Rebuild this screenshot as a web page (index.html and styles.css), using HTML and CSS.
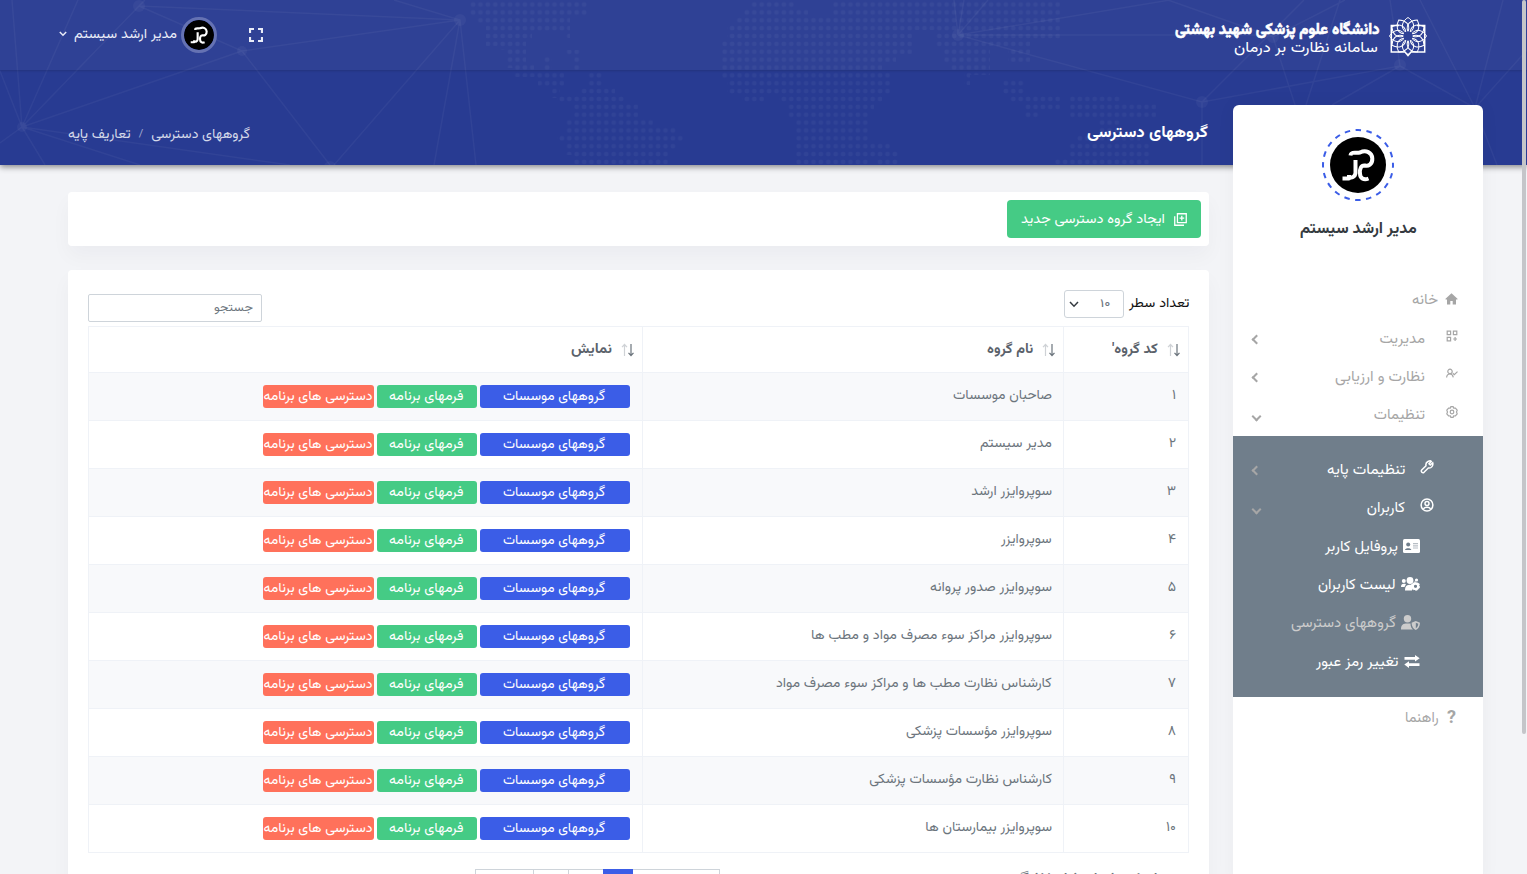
FILE: index.html
```html
<!DOCTYPE html>
<html lang="fa" dir="rtl">
<head>
<meta charset="utf-8">
<title>گروههای دسترسی</title>
<link rel="stylesheet" href="styles.css">
</head>
<body>
<div class="page">
<header class="hero">
  <svg class="art" width="1527" height="165" viewBox="0 0 1527 165">
    <defs><pattern id="dots" x="499" y="0.6" width="7.4" height="7.87" patternUnits="userSpaceOnUse"><circle cx="3.7" cy="3.9" r="2.3" fill="#fff" fill-opacity=".04"/></pattern></defs>
    <g fill="url(#dots)">
      <path d="M469 0H588V16H570V38H565V32H532V40H526V64H534V72H544V56H552V72H564V86H560V98H552V86H538V77H513V68H506V50H499V46H486V24H477V16H469Z"/>
      <path d="M566 50H580V70H602V87H587V70H573V56H566ZM580 87H615V95H624V103H638V118H653V126H676V133H683V142H676V150H668V165H573V155H565V142H557V134H565V118H573V102H557V94H580Z"/>
      <path d="M750 0H796V9H808V16H833V0H1060V40H1030V62H1008V46H990V75H970V85H964V70H950V64H944V48H936V30H912V40H912V54H896V62H882V70H890V94H882V102H874V110H868V165H795V118H787V102H779V94H764V102H742V94H727V80H720V40H727V24H735V16H743V8H750Z"/>
      <path d="M868 142H890V150H898V165H876V158H868ZM1002 78H1025V94H1060V110H1040V118H1025V102H1010V94H1002ZM1070 94H1120V102H1156V118H1120V134H1140V142H1150V165H1054V157H1068V142H1076V134H1098V118H1070Z"/>
    </g>
    <g class="net">
      <path d="M139 6L145 0M139 6L22 127L12 0M139 6L242 51L460 20ZM22 127L78 0M22 127L0 71M22 127L242 51L330 165M22 127L0 143M22 127L45 165M22 127L140 165M22 127L290 165M394 0L460 20L434 165M460 20L476 165M460 20L334 165M958 35L1170 0M958 35L954 0M958 35L964 0M958 35L988 0M958 35H1273M958 35L1202 102L1400 66L1390 0M1202 102V165M1202 102L1304 0M1168 0L1273 37L1345 0M1273 37L1296 108M1400 66L1332 105M1400 66L1475 108L1527 50M1475 108L1420 0M1475 108L1503 0M1340 0L1306 105M1475 108L1497 165"/>
      <g class="knots"><circle cx="139" cy="6" r="6"/><circle cx="22" cy="127" r="5"/><circle cx="242" cy="51" r="5"/><circle cx="460" cy="20" r="6"/><circle cx="958" cy="35" r="6"/><circle cx="1202" cy="102" r="6"/><circle cx="1273" cy="37" r="6"/><circle cx="1400" cy="65" r="6"/><circle cx="330" cy="167" r="6"/></g>
    </g>
  </svg>
  <div class="topbar">
    <div class="brand">
      <svg width="38" height="42" viewBox="0 0 38 42" fill="none" stroke="#fff">
        <path d="M10 9.600H2.300V36H16L19 39.500L22 36H35.700V9.600H28" stroke-width="1.500"/>
        <g id="rose" stroke-width="1"></g>
      </svg>
      <div class="brand-text"><b data-w="205">دانشگاه علوم پزشکی شهید بهشتی</b><span data-w="144">سامانه نظارت بر درمان</span></div>
    </div>
    <div class="tools">
      <svg class="full" width="14" height="14" viewBox="0 0 14 14" fill="none" stroke="#e9ecf8" stroke-width="2.200"><path d="M1 5V1H5M9 1H13V5M13 9V13H9M5 13H1V9"/></svg>
      <svg class="mini" viewBox="0 0 56 56"><use href="#mono"/></svg>
      <span class="user" data-w="103">مدیر ارشد سیستم</span>
      <svg class="caret" width="8" height="6" viewBox="0 0 8 6" fill="none" stroke="#e9ecf8" stroke-width="1.500"><path d="M.8 1L4 4.200L7.200 1"/></svg>
    </div>
  </div>
  <div class="titlebar">
    <h1 data-w="121">گروههای دسترسی</h1>
    <nav class="crumbs"><span data-w="99">گروههای دسترسی</span><i>/</i><span data-w="63">تعاریف پایه</span></nav>
  </div>
</header>

<div class="body">
  <aside class="side">
    <svg class="avatar" width="74" height="74" viewBox="0 0 74 74">
      <circle cx="37" cy="37" r="35" fill="none" stroke="#3b5de7" stroke-width="2" stroke-dasharray="5.500 5.495" stroke-dashoffset="2.700"/>
      <svg x="9" y="9" width="56" height="56" viewBox="0 0 56 56"><g id="mono"><circle cx="28" cy="28" r="28"/><path fill="none" stroke="#fff" stroke-width="4" stroke-linejoin="round" d="M20.500 18.500C21 14 25 16.500 30 15.500C36 12.500 42 15.500 42.300 21.500C42.600 27.500 38 29.500 35 28.500C31 28 29.500 32 30 36.500C30 41 33.500 43.500 38.500 41.500M25.500 23V36C25 40 21.500 41.500 19 39.500M19 38V41.500H12.500"/></g></svg>
    </svg>
    <div class="name" data-w="117">مدیر ارشد سیستم</div>
    <ul class="menu">
      <li class="flat"><svg width="13" height="12" viewBox="0 0 12 12" fill="#a6a6a6"><path d="M6 .3L12 5.800V6.500H10.500V11.500H7.200V8H4.800V11.500H1.500V6.500H0V5.800Z"/></svg><span data-w="26">خانه</span></li>
      <li><svg width="12" height="12" viewBox="0 0 12 12" class="ln"><path d="M1.200 1.200H4.600V4.600H1.200ZM7.400 1.200H10.800V4.600H7.400ZM1.200 7.400H4.600V10.800H1.200ZM7.200 9H11M9.100 7.100V11"/></svg><span data-w="46">مدیریت</span><i class="go"></i></li>
      <li><svg width="12" height="12" viewBox="0 0 12 12" class="ln"><circle cx="4" cy="3.400" r="2.200"/><path d="M.6 9.500C.8 6.700 2 6 4 6S6.800 6.900 7.300 9.300M6.800 5.300L8.300 6.600L11.500 3.600"/></svg><span data-w="90">نظارت و ارزیابی</span><i class="go"></i></li>
      <li><svg width="12" height="12" viewBox="0 0 12 12" class="ln"><path d="M4.900.7H7.100L7.700 2.100L9.400 2L11.200 4.200L10.500 6L11.200 7.800L9.400 10L7.700 9.900L7.100 11.300H4.900L4.300 9.900L2.600 10L.8 7.800L1.500 6L.8 4.200L2.600 2L4.300 2.100Z"/><circle cx="6" cy="6" r="1.800"/></svg><span data-w="51">تنظیمات</span><i class="dn"></i></li>
    </ul>
    <ul class="menu sub">
      <li class="l2"><svg width="14" height="14" viewBox="0 0 14 14" class="ln"><path d="M8 1.500C10 .5 11 1 11.300 1.400L9 3.700L10.300 5L12.700 2.800C13.500 5.500 11.500 8.500 8.300 8L4 12.300C2.500 13.500.5 11.500 1.700 10L6 5.700C5.600 4 6.500 2.300 8 1.500Z"/></svg><span data-w="78">تنظیمات پایه</span><i class="go"></i></li>
      <li class="l2"><svg width="14" height="14" viewBox="0 0 14 14" class="ln"><circle cx="7" cy="7" r="5.900"/><circle cx="7" cy="5.600" r="2"/><path d="M3.700 11C4 8.500 10 8.500 10.300 11"/></svg><span data-w="38">کاربران</span><i class="dn"></i></li>
      <li class="l3"><svg width="17" height="14" viewBox="0 0 17 14"><rect width="17" height="14" rx="1.500" fill="#fff"/><g fill="#6f7e8c"><circle cx="5.200" cy="5.500" r="2"/><path d="M2 11C2 8.600 8.300 8.600 8.300 11Z"/><path opacity=".5" d="M10 4H15V5.200H10ZM10 6.200H15V7.400H10ZM10 8.400H15V9.400H10Z"/></g></svg><span data-w="73">پروفایل کاربر</span></li>
      <li class="l3"><svg width="19" height="14" viewBox="0 0 19 14" fill="#fff"><circle cx="9" cy="3.500" r="3.400"/><circle cx="2.800" cy="4" r="2"/><circle cx="15.500" cy="3" r="1.600"/><path d="M0 10C0 6.500 2 6.500 5 7L3.500 10ZM4 13.500C4 8 7 7.500 11 7.800V13.500Z"/><circle cx="14.500" cy="9.200" r="2.700" fill="none" stroke="#fff" stroke-width="2.400"/><circle cx="14.500" cy="9.200" r="4.200" fill="none" stroke="#fff" stroke-dasharray="2.200 2.200"/><circle cx="14.500" cy="9.200" r="1.200" fill="#707e8b"/></svg><span data-w="78">لیست کاربران</span></li>
      <li class="l3 on"><svg width="19" height="15" viewBox="0 0 19 15" fill="#ccc"><circle cx="6.500" cy="3.800" r="3.700"/><path d="M0 14.500C0 9.500 2 8.500 6.500 8.500H9.500C9.500 11.500 10.500 13.500 12 14.500ZM14.800 6L19 7.700C19 11.500 17 14 14.800 15C12.500 14 10.600 11.500 10.600 7.700Z"/><path d="M14.800 7.700L17.300 8.700C17.200 11 16.200 12.500 14.800 13.300Z" fill="#6f7e8c"/></svg><span data-w="105">گروههای دسترسی</span></li>
      <li class="l3"><svg width="16" height="13" viewBox="0 0 16 13" fill="#fff"><path d="M.5 2H11V0L15.700 3.300L11 6.500V4.700H.5ZM15.500 8.200H5V6.300L.3 9.600L5 12.900V11H15.500Z"/></svg><span data-w="83">تغییر رمز عبور</span></li>
    </ul>
    <ul class="menu last"><li class="flat"><b class="q">?</b><span data-w="34">راهنما</span></li></ul>
  </aside>

  <main>
    <section class="card actions"><button class="add"><svg width="15" height="15" viewBox="0 0 14 14" fill="none" stroke="#fff" stroke-width="1.400"><path d="M3.700.8H13.200V10.300H3.700ZM8.400 3V8M6 5.500H11M.8 3.500V13.200H10.800"/></svg><span data-w="144">ایجاد گروه دسترسی جدید</span></button></section>
    <section class="card list">
      <div class="filters">
        <label><span data-w="60">تعداد سطر</span><span class="select"><span data-w="11">۱۰</span><svg width="10" height="7" viewBox="0 0 10 7" fill="none" stroke="#343a40" stroke-width="1.500"><path d="M1 1L5 5.200L9 1"/></svg></span></label>
        <div class="search"><span data-w="39">جستجو</span></div>
      </div>
      <table>
        <colgroup><col class="c1"><col class="c2"><col class="c3"></colgroup>
        <thead><tr><th><div><i class="sort"></i><span data-w="46">کد گروه'</span></div></th><th><div><i class="sort"></i><span data-w="46">نام گروه</span></div></th><th><div><i class="sort"></i><span data-w="41">نمایش</span></div></th></tr></thead>
        <tbody id="rows"></tbody>
      </table>
      <div class="foot"><span class="info" data-w="182">نمایش ۱ تا ۱۰ از ۱۲ گروه</span>
        <div class="pager"><span class="p1"></span><span class="p2"></span><span class="p3"></span><span class="p4"></span><span class="p5"></span></div></div>
    </section>
  </main>
</div>
<div class="scroll"></div>
</div>
<script src="script.js"></script>
</body>
</html>
```
FILE: styles.css
```css
*{box-sizing:border-box}
html,body{margin:0;height:874px;overflow:hidden}
body{background:#f3f4f7;font-family:"Vazirmatn","Noto Sans Arabic","DejaVu Sans",sans-serif;font-size:14px;line-height:20px;color:#6c757d}
ul{list-style:none;margin:0;padding:0}
i{font-style:normal}
[data-w]{display:block;flex:none;white-space:nowrap;text-align:right}
[data-w]>.ink{display:inline-block;transform-origin:100% 50%}
.page{position:relative;height:874px;overflow:hidden}
.hero{position:relative;height:165px;background:#283b92;box-shadow:0 2px 6px rgba(0,0,0,.45);color:#fff}
.art{position:absolute;left:0;top:0}
.net{fill:none;stroke:#fff;stroke-opacity:.045;stroke-width:1.500}
.knots{fill:#fff;fill-opacity:.04;stroke:none}
.topbar{position:relative;height:70px;background:rgba(255,255,255,.035);box-shadow:0 1px 2px rgba(0,0,0,.15);display:flex;justify-content:space-between;padding:0 100px 0 59px}
.brand{display:flex;gap:9px;padding-top:16px}
.brand-text{padding-top:4px;display:flex;flex-direction:column}
.brand-text b{font-size:16px;line-height:21px;-webkit-text-stroke:.6px #fff}
.brand-text span{line-height:inherit}
.brand-text>span{font-size:15px;line-height:15px;margin-right:2px}
.tools{display:flex;align-items:center;height:70px}
.full{margin-left:32px}
.mini{width:36px;height:36px;border:3px solid #6572b3;border-radius:50%;margin-left:4px}
.user{color:#e9ecf8}
.caret{margin-right:7px;margin-top:-3px}
.titlebar{position:relative;height:95px;display:flex;justify-content:space-between;align-items:center;padding:32px 319px 0 68px}
h1{margin:0;font-size:16px;line-height:24px}
.crumbs{display:flex;color:#d4d8e9;align-items:center;padding-top:2px}
.crumbs i{width:20px;text-align:center;font-size:11px;opacity:.7}
.body{display:flex;gap:24px;padding:0 44px 0 68px;align-items:flex-start}
.side{position:relative;width:250px;height:780px;margin-top:-60px;background:#fff;border-radius:6px 6px 0 0;flex:none;box-shadow:0 0 20px rgba(18,38,63,.04);padding-top:23px}
.avatar{display:block;margin:0 auto}
.name{font-weight:bold;font-size:16px;line-height:24px;margin:16px auto 0;left:-1px;color:#343a40}
.menu{font-size:15px;color:#a6a6a6}
.menu li{height:38.4px;display:flex;align-items:center;padding:0 25px 0 20px;position:relative}
.menu:not(.sub):not(.last){margin-top:39px}
.menu li>[data-w]{padding-top:2px}
.menu li>svg{flex:none;margin-left:21px;margin-top:-6px}
.menu li.flat>svg{margin-left:7px;margin-top:-2px}
.ln{fill:none;stroke:currentColor;stroke-width:1.200}
.go,.dn{width:7px;height:7px;border-left:2px solid #a6a6a6;border-bottom:2px solid #a6a6a6;margin-right:auto;margin-top:2px;transform:rotate(45deg)}
.dn{transform:rotate(-45deg)}
.menu li .go{margin-left:0}
.sub{background:#707e8b;color:#fff;height:261px;padding-top:15px;margin-top:1px}
.sub li.l2{padding-right:49px}
.sub li.l2>svg{margin-left:15px;stroke-width:1.500}
.sub li.l3{padding-right:63px}
.sub li.l3>svg{margin-left:5px;margin-top:-1px}
.sub li.on{color:#ccc}
.last{padding-top:2px}
.q{font-size:18px;width:13px;margin-left:6px;margin-top:-2px;text-align:center;font-family:Roboto,sans-serif}
main{width:1141px;flex:none;padding-top:27px}
.card{background:#fff;border-radius:4px;box-shadow:0 10px 20px rgba(18,38,63,.035)}
.actions{height:54px;padding:8px;margin-bottom:24px}
.add{width:194px;height:38px;border:0;border-radius:4px;background:#45cb85;color:#fff;padding:1px 14px 0;display:flex;align-items:center;gap:9px;font:14px "Vazirmatn","Noto Sans Arabic","DejaVu Sans",sans-serif}
.list{height:640px;padding:20px 20px 0}
.filters{display:flex;justify-content:space-between;height:36px}
.filters label{display:flex;gap:5px;color:#111;height:28px;align-items:center}
.select{width:60px;height:28px;border:1px solid #ced4da;border-radius:3px;display:flex;align-items:center;justify-content:space-between;padding:0 12px 0 4px;color:#6c757d;font-size:12px}
.search{width:174px;height:28px;border:1px solid #ced4da;border-radius:2px;margin-top:4px;padding:0 8px;display:flex;align-items:center;font-size:12px}
table{border-collapse:collapse;table-layout:fixed;width:1100px}
.c1{width:125px}.c2{width:421px}.c3{width:554px}
th,td{border:1px solid #eff2f7;padding:0 11px}
th{height:46px;padding:0 7px;color:#5b626b}
th>div{display:flex;align-items:center;gap:9px}
td{height:48px;padding-bottom:2px;color:#6c757d}
td:first-child{padding-right:12px}
td:last-child{padding:0 12px}
tbody tr:nth-child(odd){background:#f8f9fb}
.sort{width:14px;height:14px;flex:none}
.sort svg{display:block}
.btns{display:flex;gap:3px;color:#fff}
.btns>div{height:23px;border-radius:3px;display:flex;align-items:center;justify-content:center}
.btns>div{padding-right:1px}
.blue{width:150px;background:#3b5de7}.green{width:100px;background:#45cb85}.red{width:111px;background:#ff715b}
.foot{display:flex;justify-content:space-between;padding:16px 13px 0 387px}
.info{margin-top:-1px;line-height:22px}
.pager{display:flex;height:36px;border:1px solid #ced4da}
.pager span{border-left:1px solid #ced4da}
.pager .p1{width:86px;border-left:0}.pager .p2{width:30px;margin-top:-1px;border-left:0;background:#3b5de7}.p3,.p4{width:35px}.pager .p5{width:57px;border-left:0}
.scroll{position:absolute;right:1px;top:0;width:4px;height:734px;background:#c4c5c9;border-radius:2px}
```
FILE: script.js
```js
const names = ['صاحبان موسسات','مدیر سیستم','سوپروایزر ارشد','سوپروایزر','سوپروایزر صدور پروانه','سوپروایزر مراکز سوء مصرف مواد و مطب ها','کارشناس نظارت مطب ها و مراکز سوء مصرف مواد','سوپروایزر مؤسسات پزشکی','کارشناس نظارت مؤسسات پزشکی','سوپروایزر بیمارستان ها'];
const widths = [99,72,81,51,122,241,276,146,183,127];
const digits = ['۱','۲','۳','۴','۵','۶','۷','۸','۹','۱۰'];
document.getElementById('rows').innerHTML = names.map((n, i) =>
  `<tr><td>${digits[i]}</td><td><span data-w="${widths[i]}">${n}</span></td><td><div class="btns"><div class="blue"><span data-w="102">گروههای موسسات</span></div><div class="green"><span data-w="74">فرمهای برنامه</span></div><div class="red"><span data-w="109">دسترسی های برنامه</span></div></div></td></tr>`).join('');

document.querySelectorAll('.sort').forEach(s => {
  s.innerHTML = '<svg width="14" height="14" viewBox="0 0 14 14" fill="none" stroke-width="1.2"><path stroke="#6c757d" d="M10 1V12M7.500 9.800L10 12.500L12.500 9.800"/><path stroke="#cfd2d6" d="M3.500 13V2M1 4.200L3.500 1.500L6 4.200"/></svg>';
});

// Interlaced petals of the emblem, rotated round its centre.
let petals = '';
for (let a = 0; a < 360; a += 30) petals += `<path transform="rotate(${a} 19 20)" d="M16.500 16C10.500 11 14 4.500 19 1.500C24 4.500 27.500 11 21.500 16"/>`;
document.getElementById('rose').innerHTML = petals;

document.querySelectorAll('[data-w]').forEach(el => {
  const w = +el.dataset.w;
  const ink = document.createElement('span');
  ink.className = 'ink';
  ink.append(...el.childNodes);
  el.append(ink);
  el.style.width = w + 'px';
  ink.style.transform = `scaleX(${w / ink.offsetWidth})`;
});
```
